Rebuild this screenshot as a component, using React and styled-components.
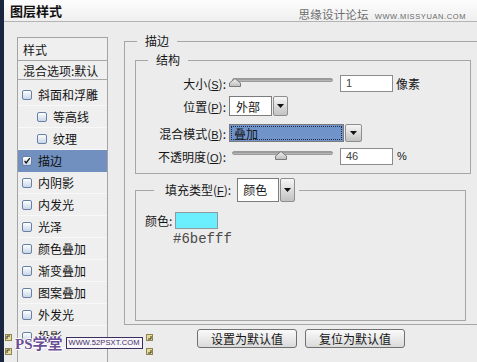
import React from 'react';
import styled, { createGlobalStyle } from 'styled-components';

const Global = createGlobalStyle`
  html, body { margin: 0; padding: 0; }
  body {
    width: 477px; height: 362px; overflow: hidden; background: #ececec;
    font-family: "Noto Sans CJK SC", "Liberation Sans", sans-serif;
    font-size: 12px; color: #161616;
  }
`;

const Dialog = styled.div`
  position: relative;
  width: 477px; height: 362px; overflow: hidden;
  box-sizing: border-box;
  border-left: 4px solid #1a2640;
  background: #ececec;
  display: flex; flex-direction: column;
`;

const TitleBar = styled.div`
  height: 22px; flex: none;
  box-sizing: border-box;
  display: flex; align-items: center; justify-content: space-between;
  padding: 0 11px 0 6px;
  border-bottom: 1px solid #b4b4b4;
  background: linear-gradient(#fdfdfd, #efefef);
`;

const Title = styled.div`
  font-weight: bold; font-size: 13px; line-height: 16px; color: #111;
`;

const SiteMark = styled.div`
  display: flex; align-items: baseline; gap: 6px; margin-top: 7px;
  color: #6d6d6d;
`;
const SiteCn = styled.span` font-size: 11.5px; line-height: 14px; letter-spacing: 0.2px; `;
const SiteEn = styled.span`
  font-family: "Liberation Sans", sans-serif; font-size: 7.5px; letter-spacing: 0.6px; color: #6a6a6a;
`;

const Body = styled.div`
  flex: 1; display: flex; align-items: flex-start;
  padding: 11px 0 0 13px; overflow: hidden;
`;

const List = styled.div`
  flex: none; width: 91px; height: 340px; margin-top: 4px;
  box-sizing: border-box; border: 1px solid #a4a4a4;
  background: #efefef;
  display: flex; flex-direction: column;
`;

const ListHead = styled.div`
  height: ${p => p.$h}px; flex: none; box-sizing: border-box;
  display: flex; align-items: center; padding-left: 5px;
  border-bottom: 1px solid #a8a8a8;
  white-space: nowrap;
`;

const Items = styled.div` padding-top: 4px; display: flex; flex-direction: column; `;

const Item = styled.div`
  height: 22px; box-sizing: border-box;
  display: flex; align-items: center; gap: 6px;
  padding-left: ${p => (p.$indent ? 19 : 4)}px;
  background: ${p => (p.$sel ? '#7190c0' : 'transparent')};
  border-bottom: 1px solid ${p => (p.$sel ? '#7190c0' : '#f8f8f8')};
  color: #111;
  white-space: nowrap;
`;

const Box = styled.span`
  width: 10px; height: 10px; flex: none; box-sizing: border-box;
  border: 1px solid #6680a6; border-radius: 2px;
  background: linear-gradient(#ffffff, #c9d5e6);
  display: flex; align-items: center; justify-content: center;
`;

const RightCol = styled.div`
  flex: none; width: 360px; margin-left: 16px;
  display: flex; flex-direction: column;
`;

const Group = styled.fieldset`
  margin: ${p => p.$mt || 0}px 0 0 0;
  padding: ${p => p.$pad};
  width: ${p => p.$w}px;
  box-sizing: border-box;
  border: 1px solid #a6a6a6;
  min-width: 0;
  display: flex; flex-direction: column;
`;

const Legend = styled.legend`
  padding: 0 ${p => p.$pr ?? 8}px 0 ${p => p.$pl ?? 8}px;
  margin-left: ${p => p.$ml || 0}px;
  line-height: 16px; font-size: 12px;
`;

const LegendRow = styled.span`
  display: inline-flex; align-items: center; gap: 6px;
`;

const Row = styled.div`
  display: flex; align-items: center; height: 20px;
  margin-top: ${p => p.$mt}px;
`;

const Label = styled.div`
  width: 78px; flex: none; margin-right: 3px;
  text-align: right; white-space: nowrap;
`;

const Key = styled.u`
  text-decoration: underline;
  font-family: "Liberation Sans", sans-serif; font-size: 11px;
`;

const SliderWrap = styled.div`
  position: relative; width: 108px; height: 20px; flex: none;
  display: flex; flex-direction: column;
`;

const Track = styled.div`
  margin: 5px 4px 0 3px; height: 4px; border-radius: 2px;
  background: linear-gradient(#8e8e8e, #c4c4c4);
  border: 1px solid #9a9a9a; box-sizing: border-box;
`;

const Thumb = styled.svg`
  position: absolute; top: 5px;
`;

const NumInput = styled.div`
  width: 53px; height: 17px; flex: none; margin-left: 3px;
  box-sizing: border-box; border: 1px solid #8c8c8c; background: #fff;
  display: flex; align-items: center; padding-left: 5px;
  font-family: "Liberation Sans", sans-serif; font-size: 11px; color: #444;
`;

const Unit = styled.span`
  margin-left: ${p => p.$ml}px; white-space: nowrap;
  font-family: ${p => (p.$latin ? '"Liberation Sans", sans-serif' : 'inherit')};
  font-size: ${p => (p.$latin ? 11 : 12)}px;
`;

const Select = styled.div`
  display: flex; height: ${p => p.$h}px; gap: 1px; flex: none;
`;

const SelectField = styled.div`
  width: ${p => p.$w}px; box-sizing: border-box;
  border: 1px solid #7c7c7c;
  background: ${p => (p.$active ? '#7094ca' : '#fff')};
  outline: ${p => (p.$active ? '1px dotted #1e2c4a' : 'none')};
  outline-offset: -3px;
  display: flex; align-items: center; padding-left: ${p => p.$pl}px;
  white-space: nowrap;
`;

const ArrowBtn = styled.div`
  width: ${p => p.$w}px; box-sizing: border-box;
  border: 1px solid #8e8e8e; border-radius: 2px;
  background: linear-gradient(#f6f6f6, #c2c2c2);
  display: flex; align-items: center; justify-content: center;
`;

const ColorRow = styled.div`
  display: flex; align-items: center; height: 17px; margin-top: 10px;
`;

const Swatch = styled.div`
  width: 43px; height: 17px; margin-left: 3px; box-sizing: border-box;
  border: 1px solid #8c9aa0; background: #6befff;
`;

const Hex = styled.div`
  margin: 2px 0 0 28px; line-height: 16px;
  font-family: "Liberation Mono", monospace; font-size: 14px; color: #4a4a4a;
`;

const Buttons = styled.div`
  display: flex; gap: 8px; padding-left: 73px; margin-top: 4px;
`;

const Button = styled.div`
  width: 100px; height: 19px; box-sizing: border-box;
  border: 1px solid #707070; border-radius: 3px;
  background: linear-gradient(#fafafa, #dadada);
  display: flex; align-items: center; justify-content: center;
  font-size: 12px;
`;

const Stamp = styled.div`
  position: absolute; left: 1px; bottom: 7px;
  display: flex; align-items: center; gap: 3px;
`;

const Corners = styled.div`
  display: flex; flex-direction: column; gap: 7px;
`;

const PsText = styled.span`
  font-size: 15px; font-weight: bold; line-height: 17px; color: #6a4f96;
  text-shadow: 1px 0 0 #fff, -1px 0 0 #fff, 0 1px 0 #fff, 0 -1px 0 #fff;
  font-family: "Liberation Serif", "Noto Sans CJK SC", serif;
`;

const UrlBox = styled.span`
  height: 12px; box-sizing: border-box; padding: 0 2px;
  border: 1px solid #3d2f5c; background: #f7f4fb;
  display: flex; align-items: center; margin-top: -4px;
  font-family: "Liberation Sans", sans-serif; font-size: 7.5px; letter-spacing: 0.1px; color: #3d2f5c;
`;

const Tri = () => (
  <svg width="7" height="4" viewBox="0 0 7 4"><polygon points="0,0 7,0 3.5,4" fill="#111" /></svg>
);

const Check = () => (
  <svg width="10" height="10" viewBox="0 0 10 10"><path d="M2 5 L4 7.5 L8.5 1.5" stroke="#111" strokeWidth="1.6" fill="none" /></svg>
);

const Corner = ({ flip }) => (
  <svg width="7" height="7" viewBox="0 0 7 7">
    <rect x="0.5" y="0.5" width="6" height="6" fill="#e4dc98" stroke="#8d8450" />
    <path d={flip ? 'M5 2 V5 H2' : 'M2 5 V2 H5'} stroke="#333" fill="none" />
  </svg>
);

const Slider = ({ pct }) => (
  <SliderWrap>
    <Track />
    <Thumb width="12" height="9" viewBox="0 0 12 9" style={{ left: pct * 1.0 + 'px' }}>
      <defs>
        <linearGradient id="tg" x1="0" y1="0" x2="0" y2="1">
          <stop offset="0" stopColor="#f2f2f2" />
          <stop offset="1" stopColor="#bdbdbd" />
        </linearGradient>
      </defs>
      <path d="M6 0.5 L11.5 5 L11.5 8.5 L0.5 8.5 L0.5 5 Z" fill="url(#tg)" stroke="#7a7a7a" />
    </Thumb>
  </SliderWrap>
);

const items = [
  { t: '斜面和浮雕' },
  { t: '等高线', indent: true },
  { t: '纹理', indent: true },
  { t: '描边', sel: true, checked: true },
  { t: '内阴影' },
  { t: '内发光' },
  { t: '光泽' },
  { t: '颜色叠加' },
  { t: '渐变叠加' },
  { t: '图案叠加' },
  { t: '外发光' },
  { t: '投影' },
];

export default function App() {
  return (
    <>
      <Global />
      <Dialog>
        <TitleBar>
          <Title>图层样式</Title>
          <SiteMark>
            <SiteCn>思缘设计论坛</SiteCn>
            <SiteEn>WWW.MISSYUAN.COM</SiteEn>
          </SiteMark>
        </TitleBar>
        <Body>
          <List>
            <ListHead $h={23}>样式</ListHead>
            <ListHead $h={19}>混合选项:默认</ListHead>
            <Items>
              {items.map((it) => (
                <Item key={it.t} $indent={it.indent} $sel={it.sel}>
                  <Box>{it.checked && <Check />}</Box>
                  <span>{it.t}</span>
                </Item>
              ))}
            </Items>
          </List>
          <RightCol>
            <Group $w={360} $pad="3px 0 3px 10px">
              <Legend $ml={2}>描边</Legend>
              <Group $w={336} $pad="0 0 7px 12px">
                <Legend>结构</Legend>
                <Row $mt={5}>
                  <Label>大小(<Key>S</Key>):</Label>
                  <Slider pct={0} />
                  <NumInput>1</NumInput>
                  <Unit $ml={3}>像素</Unit>
                </Row>
                <Row $mt={3}>
                  <Label>位置(<Key>P</Key>):</Label>
                  <Select $h={20}>
                    <SelectField $w={43} $pl={6}>外部</SelectField>
                    <ArrowBtn $w={15}><Tri /></ArrowBtn>
                  </Select>
                </Row>
                <Row $mt={7}>
                  <Label>混合模式(<Key>B</Key>):</Label>
                  <Select $h={18}>
                    <SelectField $w={115} $pl={4} $active>叠加</SelectField>
                    <ArrowBtn $w={17}><Tri /></ArrowBtn>
                  </Select>
                </Row>
                <Row $mt={3}>
                  <Label>不透明度(<Key>O</Key>):</Label>
                  <Slider pct={46} />
                  <NumInput>46</NumInput>
                  <Unit $ml={4} $latin>%</Unit>
                </Row>
              </Group>
              <Group $w={331} $mt={4} $pad="0 0 73px 9px">
                <Legend $ml={9} $pl={11} $pr={4}>
                  <LegendRow>
                    <span>填充类型(<Key>F</Key>):</span>
                    <Select $h={24}>
                      <SelectField $w={42} $pl={5}>颜色</SelectField>
                      <ArrowBtn $w={15}><Tri /></ArrowBtn>
                    </Select>
                  </LegendRow>
                </Legend>
                <ColorRow>
                  <span>颜色:</span>
                  <Swatch />
                </ColorRow>
                <Hex>#6befff</Hex>
              </Group>
            </Group>
            <Buttons>
              <Button>设置为默认值</Button>
              <Button>复位为默认值</Button>
            </Buttons>
          </RightCol>
        </Body>
        <Stamp>
          <Corners><Corner /><Corner /></Corners>
          <PsText>PS学堂</PsText>
          <UrlBox>WWW.52PSXT.COM</UrlBox>
          <Corners><Corner flip /><Corner flip /></Corners>
        </Stamp>
      </Dialog>
    </>
  );
}
